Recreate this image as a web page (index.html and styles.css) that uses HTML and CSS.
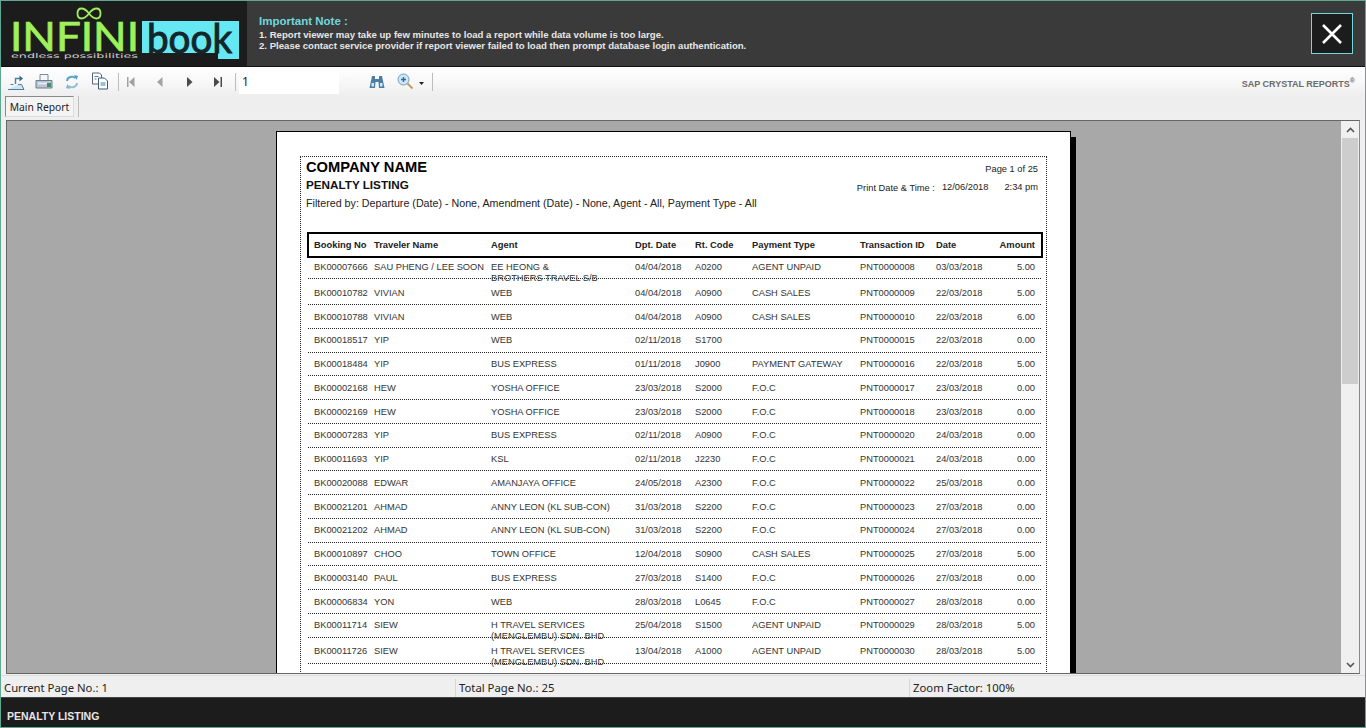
FILE: index.html
```html
<!DOCTYPE html>
<html lang="en">
<head>
    <meta charset="UTF-8">
    <meta name="viewport" content="width=device-width, initial-scale=1.0">
    <title>Penalty Listing</title>
    <link rel="stylesheet" href="styles.css">
</head>
<body>
    <div class="window">
        <div class="banner">
            <div class="logo">
                <svg width="246" height="66" viewBox="0 0 246 66">
                    <path d="M88 12.500c-3-4-5-5-7.500-5c-2.500 0-4 2-4 5c0 3 1.500 5 4 5c2.500 0 4.500-1 7.500-5c3-4 5-5 7.500-5c2.500 0 4 2 4 5c0 3-1.500 5-4 5c-2.500 0-4.500-1-7.500-5z" fill="none" stroke="#9ff05a" stroke-width="1.800"/>
                    <text class="logo-infini" x="9" y="50" textLength="129" lengthAdjust="spacingAndGlyphs">INFINI</text>
                    <text class="logo-tag" x="10" y="57" textLength="127" lengthAdjust="spacingAndGlyphs">endless possibilities</text>
                    <path d="M141 20H238V58H217V52H141z" fill="#66e8f2"/>
                    <text class="logo-book" x="146" y="52" textLength="85" lengthAdjust="spacingAndGlyphs">book</text>
                </svg>
            </div>
            <div class="note">
                <div class="note-title">Important Note :</div>
                <div>1. Report viewer may take up few minutes to load a report while data volume is too large.</div>
                <div>2. Please contact service provider if report viewer failed to load then prompt database login authentication.</div>
            </div>
            <div class="close-btn">
                <svg width="22" height="22" viewBox="0 0 22 22"><path d="M2 2L20 20M20 2L2 20" stroke="#fff" stroke-width="2.600"/></svg>
            </div>
        </div>

        <div class="tools">
            <div class="toolbar">
                <svg class="tool" width="18" height="18" viewBox="0 0 18 18"><path d="M1 16.500h16l-2.500-5H11M3.500 11.500h3" fill="#cfe3f2" stroke="#4f7f9f"/><path d="M8.500 11V5.500H13" fill="none" stroke="#4f7f9f" stroke-width="1.400"/><path d="M12.500 2.500L16 5.500L12.500 8.500z" fill="#2f6d94"/></svg>
                <svg class="tool" width="18" height="18" viewBox="0 0 18 18"><path d="M5 1.500h8v6H5z" fill="#f4f6f8" stroke="#7d8b99"/><path d="M1 7.500h16v7.500H1z" fill="#b9c6d3" stroke="#6c7d8d"/><path d="M3 10.500h9" stroke="#eef2f6" stroke-width="1.500"/><rect x="12" y="10" width="4" height="4" fill="#3f8f6d"/></svg>
                <svg class="tool" width="18" height="18" viewBox="0 0 18 18"><path d="M4 8a5 4.500 0 0 1 8.500-3" fill="none" stroke="#5aa5c9" stroke-width="2"/><path d="M11 2L15 3L13.500 7z" fill="#4f9cc4"/><path d="M14 10a5 4.500 0 0 1-8.500 3" fill="none" stroke="#8fc0d8" stroke-width="2"/><path d="M7 16L3 15L4.500 11z" fill="#7fb4d0"/></svg>
                <svg class="tool tool-copy" width="18" height="18" viewBox="0 0 18 18"><path d="M1.500 1h7l2 2v9h-9z" fill="#fff" stroke="#59636e"/><path d="M7.500 6h6l3 3v8h-9z" fill="#fff" stroke="#3d5a73"/><path d="M3.500 4.500h4M3.500 7h2M9.500 11h5M9.500 13h5" stroke="#3f7fae"/></svg>
                <span class="tool-sep"></span>
                <svg class="nav nav-first" width="8" height="10" viewBox="0 0 8 10"><path d="M0 0h1.500v10H0zM7.500 0v10L2 5z" fill="#a2a2a2"/></svg>
                <svg class="nav nav-prev" width="6" height="10" viewBox="0 0 6 10"><path d="M5.500 0v10L0 5z" fill="#a2a2a2"/></svg>
                <svg class="nav nav-next" width="6" height="10" viewBox="0 0 6 10"><path d="M0 0v10L5.500 5z" fill="#4a4a4a"/></svg>
                <svg class="nav nav-last" width="8" height="10" viewBox="0 0 8 10"><path d="M0 0v10L5.500 5zM6.500 0H8v10H6.500z" fill="#4a4a4a"/></svg>
                <span class="tool-sep sep-page"></span>
                <div class="page-input">1</div>
                <span class="page-total">/25</span>
                <svg class="tool tool-find" width="16" height="15" viewBox="0 0 16 15"><path d="M3 1h3v3h4V1h3l2.500 12h-5.500L9.500 7h-3L6 13H.5z" fill="#4a7ea6"/><path d="M2.500 8h2.500v3.500h-2.500zM11 8h2.500v3.500H11z" fill="#cfe6f6"/></svg>
                <svg class="tool tool-zoom" width="17" height="17" viewBox="0 0 17 17"><circle cx="6.500" cy="6.500" r="5.500" fill="#cfe6f6" stroke="#6f9dbd"/><path d="M4 6.500h5M6.500 4v5" stroke="#2e6a96" stroke-width="1.400"/><path d="M10.500 10.500L15.500 15.500" stroke="#c99a5a" stroke-width="2"/></svg>
                <svg class="drop" width="5" height="3" viewBox="0 0 5 3"><path d="M0 0h5L2.500 3z" fill="#222"/></svg>
                <span class="tool-sep sep-zoom"></span>
                <div class="brand">SAP CRYSTAL REPORTS<sup>®</sup></div>
            </div>
            <div class="tabs">
                <div class="tab">Main Report</div>
                <span class="tab-sep"></span>
            </div>
        </div>

        <div class="viewer">
            <div class="canvas">
                <div class="page">
                    <div class="report">
                        <div class="report-head">
                            <div class="head-left">
                                <div class="company">COMPANY NAME</div>
                                <div class="listing">PENALTY LISTING</div>
                                <div class="filter">Filtered by: Departure (Date) - None, Amendment (Date) - None, Agent - All, Payment Type - All</div>
                            </div>
                            <div class="head-right">
                                <div class="page-no">Page 1 of 25</div>
                                <div class="print-line">
                                    <span>Print Date &amp; Time :</span>
                                    <span>12/06/2018</span>
                                    <span>2:34 pm</span>
                                </div>
                            </div>
                        </div>

                        <div class="row col-head">
                            <span>Booking No</span><span>Traveler Name</span><span>Agent</span><span>Dpt. Date</span><span>Rt. Code</span><span>Payment Type</span><span>Transaction ID</span><span>Date</span><span class="num">Amount</span>
                        </div>
                        <div class="rows">
                            <div class="row first"><span>BK00007666</span><span>SAU PHENG / LEE SOON</span><span>EE HEONG &amp;<br>BROTHERS TRAVEL S/B</span><span>04/04/2018</span><span>A0200</span><span>AGENT UNPAID</span><span>PNT0000008</span><span>03/03/2018</span><span class="num">5.00</span></div>
                            <div class="row tall"><span>BK00010782</span><span>VIVIAN</span><span>WEB</span><span>04/04/2018</span><span>A0900</span><span>CASH SALES</span><span>PNT0000009</span><span>22/03/2018</span><span class="num">5.00</span></div>
                            <div class="row"><span>BK00010788</span><span>VIVIAN</span><span>WEB</span><span>04/04/2018</span><span>A0900</span><span>CASH SALES</span><span>PNT0000010</span><span>22/03/2018</span><span class="num">6.00</span></div>
                            <div class="row"><span>BK00018517</span><span>YIP</span><span>WEB</span><span>02/11/2018</span><span>S1700</span><span></span><span>PNT0000015</span><span>22/03/2018</span><span class="num">0.00</span></div>
                            <div class="row"><span>BK00018484</span><span>YIP</span><span>BUS EXPRESS</span><span>01/11/2018</span><span>J0900</span><span>PAYMENT GATEWAY</span><span>PNT0000016</span><span>22/03/2018</span><span class="num">5.00</span></div>
                            <div class="row"><span>BK00002168</span><span>HEW</span><span>YOSHA OFFICE</span><span>23/03/2018</span><span>S2000</span><span>F.O.C</span><span>PNT0000017</span><span>23/03/2018</span><span class="num">0.00</span></div>
                            <div class="row"><span>BK00002169</span><span>HEW</span><span>YOSHA OFFICE</span><span>23/03/2018</span><span>S2000</span><span>F.O.C</span><span>PNT0000018</span><span>23/03/2018</span><span class="num">0.00</span></div>
                            <div class="row"><span>BK00007283</span><span>YIP</span><span>BUS EXPRESS</span><span>02/11/2018</span><span>A0900</span><span>F.O.C</span><span>PNT0000020</span><span>24/03/2018</span><span class="num">0.00</span></div>
                            <div class="row"><span>BK00011693</span><span>YIP</span><span>KSL</span><span>02/11/2018</span><span>J2230</span><span>F.O.C</span><span>PNT0000021</span><span>24/03/2018</span><span class="num">0.00</span></div>
                            <div class="row"><span>BK00020088</span><span>EDWAR</span><span>AMANJAYA OFFICE</span><span>24/05/2018</span><span>A2300</span><span>F.O.C</span><span>PNT0000022</span><span>25/03/2018</span><span class="num">0.00</span></div>
                            <div class="row"><span>BK00021201</span><span>AHMAD</span><span>ANNY LEON (KL SUB-CON)</span><span>31/03/2018</span><span>S2200</span><span>F.O.C</span><span>PNT0000023</span><span>27/03/2018</span><span class="num">0.00</span></div>
                            <div class="row"><span>BK00021202</span><span>AHMAD</span><span>ANNY LEON (KL SUB-CON)</span><span>31/03/2018</span><span>S2200</span><span>F.O.C</span><span>PNT0000024</span><span>27/03/2018</span><span class="num">0.00</span></div>
                            <div class="row"><span>BK00010897</span><span>CHOO</span><span>TOWN OFFICE</span><span>12/04/2018</span><span>S0900</span><span>CASH SALES</span><span>PNT0000025</span><span>27/03/2018</span><span class="num">5.00</span></div>
                            <div class="row"><span>BK00003140</span><span>PAUL</span><span>BUS EXPRESS</span><span>27/03/2018</span><span>S1400</span><span>F.O.C</span><span>PNT0000026</span><span>27/03/2018</span><span class="num">0.00</span></div>
                            <div class="row"><span>BK00006834</span><span>YON</span><span>WEB</span><span>28/03/2018</span><span>L0645</span><span>F.O.C</span><span>PNT0000027</span><span>28/03/2018</span><span class="num">0.00</span></div>
                            <div class="row"><span>BK00011714</span><span>SIEW</span><span>H TRAVEL SERVICES<br>(MENGLEMBU) SDN. BHD</span><span>25/04/2018</span><span>S1500</span><span>AGENT UNPAID</span><span>PNT0000029</span><span>28/03/2018</span><span class="num">5.00</span></div>
                            <div class="row tall"><span>BK00011726</span><span>SIEW</span><span>H TRAVEL SERVICES<br>(MENGLEMBU) SDN. BHD</span><span>13/04/2018</span><span>A1000</span><span>AGENT UNPAID</span><span>PNT0000030</span><span>28/03/2018</span><span class="num">5.00</span></div>
                        </div>
                    </div>
                </div>
            </div>
            <div class="scrollbar">
                <div class="scroll-btn"><svg width="9" height="6" viewBox="0 0 9 6"><path d="M1 5L4.500 1.500L8 5" fill="none" stroke="#555" stroke-width="1.600"/></svg></div>
                <div class="scroll-track"><div class="scroll-thumb"></div></div>
                <div class="scroll-btn"><svg width="9" height="6" viewBox="0 0 9 6"><path d="M1 1L4.500 4.500L8 1" fill="none" stroke="#555" stroke-width="1.600"/></svg></div>
            </div>
        </div>

        <div class="status">
            <div class="status-cell cell-current">Current Page No.: 1</div>
            <div class="status-cell cell-total">Total Page No.: 25</div>
            <div class="status-cell">Zoom Factor: 100%</div>
        </div>
        <div class="footer">PENALTY LISTING</div>
    </div>
</body>
</html>
```

FILE: styles.css
```css
*{
    box-sizing: border-box;
}
body{
    margin: 0;
    font-family: "Liberation Sans", Arial, sans-serif;
}
.window{
    width: 1366px;
    height: 728px;
    display: flex;
    flex-direction: column;
    overflow: hidden;
    border: 1px solid #5fa893;
    background: #efefef;
}

/* top banner */
.banner{
    height: 66px;
    flex: none;
    display: flex;
    background: #3a3a3a;
    border-bottom: 1px solid #111;
}
.logo{
    width: 246px;
    flex: none;
    background: #1c1c1c;
}
.logo svg{
    display: block;
}
.logo-infini{
    font-family: "Lato", sans-serif;
    font-weight: 400;
    font-size: 40px;
    fill: #9ff05a;
    stroke: #9ff05a;
    stroke-width: 0.700px;
}
.logo-tag{
    font-family: "DejaVu Sans", sans-serif;
    font-size: 6.500px;
    fill: #d0d0d0;
}
.logo-book{
    font-family: "Lato", sans-serif;
    font-weight: 400;
    font-size: 40px;
    fill: #12262b;
    stroke: #12262b;
    stroke-width: 1px;
}
.note{
    flex: 1;
    padding: 14px 0 0 12px;
    font-size: 9.600px;
    font-weight: bold;
    line-height: 11px;
    color: #e6e6e6;
}
.note-title{
    font-size: 11.500px;
    line-height: 13px;
    margin-bottom: 1px;
    color: #6fd8dc;
}
.close-btn{
    width: 42px;
    height: 41px;
    margin: 12px 12px 0 0;
    flex: none;
    display: flex;
    align-items: center;
    justify-content: center;
    background: #1c1c1c;
    border: 1px solid #6fd8dc;
}

/* toolbar and tab strip */
.tools{
    height: 53px;
    flex: none;
    background: linear-gradient(#fff, #f7f7f7 30%, #eee 55%, #efefef);
}
.toolbar{
    height: 28px;
    padding: 2px 0 0 6px;
    display: flex;
    align-items: center;
}
.tool{
    flex: none;
    margin-right: 10px;
}
.tool-copy{
    margin-top: -3px;
}
.tool-sep{
    width: 1px;
    height: 18px;
    flex: none;
    margin: 0 9px 0 -1px;
    background: #bdbdbd;
}
.nav{
    flex: none;
}
.nav-first{
    margin: 0 22px 0 -1px;
}
.nav-prev{
    margin-right: 24px;
}
.nav-next{
    margin-right: 21px;
}
.nav-last{
    margin-right: 13px;
}
.sep-page{
    margin: 0 3px 0 0;
}
.page-input{
    width: 100px;
    height: 23px;
    flex: none;
    padding: 2px 0 0 3px;
    background: #fff;
    font-family: "Noto Sans", sans-serif;
    font-size: 12px;
    color: #222;
}
.page-total{
    width: 30px;
    flex: none;
    padding-left: 5px;
    font-size: 11px;
    color: #f7f7f7;
}
.tool-find{
    margin: 0 12px 0 0;
}
.tool-zoom{
    margin: -2px 5px 0 0;
}
.drop{
    flex: none;
    margin-top: 2px;
}
.sep-zoom{
    margin-left: 8px;
}
.brand{
    margin: 4px 0 0 auto;
    padding-right: 10px;
    font-size: 9px;
    font-weight: bold;
    color: #6b6b6b;
}
.brand sup{
    font-size: 7px;
    line-height: 0;
}
.tabs{
    display: flex;
    align-items: center;
    padding: 1px 0 0 4px;
}
.tab{
    width: 69px;
    height: 21px;
    padding-top: 3px;
    text-align: center;
    border: 1px solid #8a8a8a;
    border-right-color: #ddd;
    border-bottom-color: #ddd;
    background: #f4f4f4;
    font-family: "Noto Sans", sans-serif;
    font-size: 10.300px;
    line-height: 14px;
    color: #222;
}
.tab-sep{
    width: 1px;
    height: 21px;
    margin-left: 4px;
    background: #bdbdbd;
}

/* scrolling report area */
.viewer{
    height: 554px;
    flex: none;
    margin: 0 5px 0 5px;
    display: flex;
    border: 1px solid #666;
    border-right-color: #888;
}
.canvas{
    flex: 1;
    overflow: hidden;
    padding: 10px 0 0 269px;
    background: #a8a8a8;
}
.page{
    width: 795px;
    height: 900px;
    padding: 24px 0 0 23px;
    background: #fff;
    border: 1px solid #000;
    box-shadow: 5px 6px 0 #000;
}
.report{
    width: 747px;
    height: 860px;
    padding: 1px 0 0 6px;
    border: 1px dotted #222;
}
.report-head{
    height: 74px;
    display: flex;
    justify-content: space-between;
    color: #111;
}
.company{
    margin-left: -1px;
    font-size: 14.700px;
    font-weight: bold;
    line-height: 18px;
    color: #000;
}
.listing{
    margin-left: -1px;
    font-size: 11.700px;
    font-weight: bold;
    line-height: 17px;
    color: #111;
}
.filter{
    margin: 1px 0 0 -1px;
    font-size: 10.700px;
    line-height: 18px;
    color: #222;
}
.head-right{
    padding: 6px 8px 0 0;
    font-size: 9.300px;
    line-height: 11px;
    color: #222;
    text-align: right;
}
.print-line{
    margin-top: 7px;
    display: flex;
    justify-content: flex-end;
    gap: 7px;
}
.print-line span:last-child{
    margin-left: 9px;
}
.print-line span:first-child{
    margin-top: 1px;
}

/* listing rows */
.row{
    height: 23.750px;
    padding: 6.500px 0 0 6px;
    display: grid;
    grid-template-columns: 60px 117px 144px 60px 57px 108px 76px 60px 39px;
    font-size: 9.300px;
    line-height: 11px;
    color: #333;
    border-bottom: 1px dotted #222;
}
.row span{
    white-space: nowrap;
}
.row .num{
    text-align: right;
}
.col-head{
    width: 736px;
    height: 26px;
    padding: 4.500px 0 0 5px;
    border: 2px solid #000;
    font-weight: bold;
    font-size: 9.400px;
    color: #222;
}
.rows{
    width: 733px;
    margin-left: 1px;
}
.first{
    height: 21px;
    padding-top: 3.500px;
}
.tall{
    height: 26px;
    padding-top: 8.500px;
}

/* scrollbar */
.scrollbar{
    width: 18px;
    flex: none;
    display: flex;
    flex-direction: column;
    background: #f0f0f0;
}
.scroll-btn{
    height: 17px;
    flex: none;
    display: flex;
    align-items: center;
    justify-content: center;
}
.scroll-track{
    flex: 1;
    padding: 0 1px;
}
.scroll-thumb{
    height: 246px;
    background: #cdcdcd;
}

/* bottom bars */
.status{
    height: 23px;
    margin-top: 1px;
    flex: none;
    display: flex;
    padding-top: 3px;
    font-family: "Noto Sans", sans-serif;
    font-size: 11.300px;
    color: #222;
    border-top: 1px solid #ddd;
    border-bottom: 1px solid #444;
}
.status-cell{
    padding: 1px 0 0 3px;
    border-right: 1px solid #d6d6d6;
}
.status-cell:last-child{
    border-right: 0;
}
.cell-current{
    width: 455px;
}
.cell-total{
    width: 454px;
}
.footer{
    flex: 1;
    padding: 12px 0 0 6px;
    background: #1c1c1c;
    font-size: 10.500px;
    font-weight: bold;
    color: #e6e6e6;
}
```
